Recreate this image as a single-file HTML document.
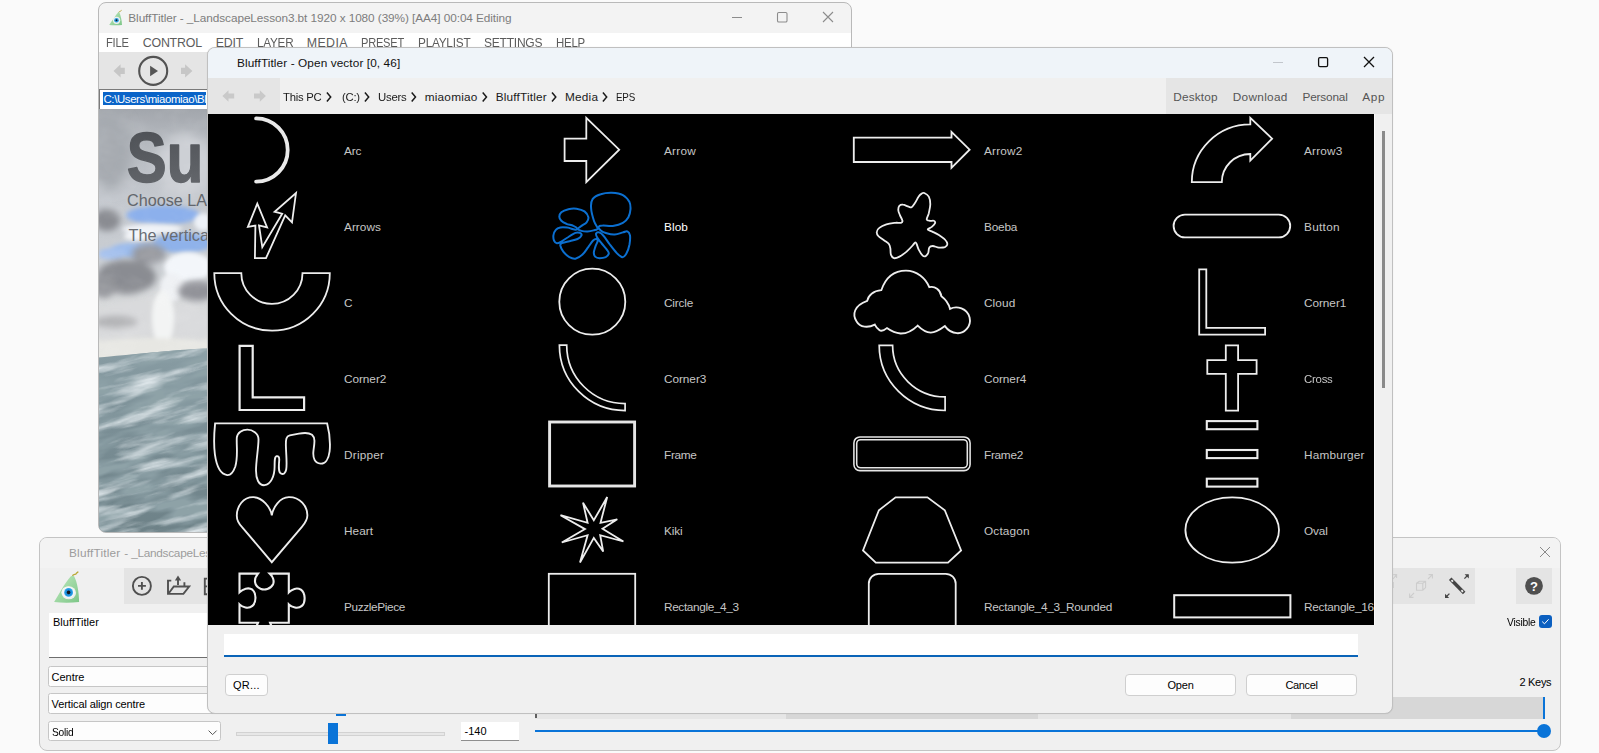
<!DOCTYPE html>
<html>
<head>
<meta charset="utf-8">
<title>BluffTitler</title>
<style>
*{box-sizing:border-box;margin:0;padding:0}
html,body{width:1599px;height:753px;overflow:hidden;background:#fafafa;font-family:"Liberation Sans",sans-serif;font-size:12px;color:#000}
.abs{position:absolute}
/* main window */
#mainwin{position:absolute;left:98px;top:2px;width:754px;height:531px;border:1px solid #b9b9b9;border-radius:8px;background:#f3f3f3;overflow:hidden}
#mainwin .title{position:absolute;left:29.3px;top:7.5px;font-size:11.8px;color:#7d7d7d;white-space:nowrap;letter-spacing:0}
#mainwin .menubar{position:absolute;left:0;top:30px;width:100%;height:19px;background:#fff}
#mainwin .menubar span{position:absolute;top:2.5px;font-size:12.4px;color:#5c5c5c;white-space:nowrap}
#mainwin .toolbar{position:absolute;left:0;top:49px;width:100%;height:37px;background:#e5e5e5}
#mainwin .path{position:absolute;left:0px;top:86px;width:300px;height:21px;background:#fff;border:1px solid #7a7a7a}
#mainwin .path span{position:absolute;left:3px;top:2px;height:13px;background:#0a64c8;color:#fff;font-size:11.4px;line-height:14.5px;white-space:nowrap;padding-left:0.5px}
#preview{position:absolute;left:0;top:106px;width:752px;height:423px;overflow:hidden;background:#9aa4ac}
/* bottom window */
#botwin{position:absolute;left:39px;top:537px;width:1522px;height:214px;border:1px solid #c4c4c4;border-radius:8px;background:#f0f0f0;overflow:hidden}
/* dialog */
#dlg{position:absolute;left:207px;top:47px;width:1186px;height:667px;border:1px solid #c0c0c0;border-radius:8px;background:#f0f0f0;overflow:hidden;box-shadow:0 0 1px rgba(0,0,0,.15)}
#dlg .tbar{position:absolute;left:0;top:0;width:100%;height:30px;background:#eff4f9}
#dlg .tbar .t{position:absolute;left:29px;top:7.5px;font-size:11.8px;color:#111;white-space:nowrap}
#dlg .nav{position:absolute;left:0;top:30px;width:100%;height:36px;background:#f0f0f0}
#dlg .nav .l{position:absolute;left:0;top:0;width:72px;height:36px;background:#e5e5e5}
#dlg .nav .r{position:absolute;left:958px;top:0;width:230px;height:36px;background:#e5e5e5}
#dlg .nav .bc{position:absolute;top:12px;font-size:11.8px;color:#1a1a1a;white-space:nowrap}
#dlg .nav .rl{position:absolute;top:12px;font-size:11.8px;color:#555;white-space:nowrap}
#grid{position:absolute;left:0;top:66px;width:1166px;height:511px;background:#000;overflow:hidden}
#grid .lb{position:absolute;font-size:11.8px;color:#c6c6c6;white-space:nowrap;line-height:14px}
#grid .lb.sel{color:#fff}
#grid svg{position:absolute;left:0;top:0}
.btn{position:absolute;height:22px;border:1px solid #cfcfcf;border-radius:4px;background:#fdfdfd;font-size:12px;text-align:center;line-height:20px;color:#000}
#dlg .sb{position:absolute;left:1174px;top:82.5px;width:3px;height:257.5px;background:#8a8a8a}
#grid:after{content:"";position:absolute;right:0;top:0;width:0;height:100%}
#dlg .wl{position:absolute;left:1166px;top:66px;width:1px;height:511px;background:#fbfbfb}
#dlg .inp{position:absolute;left:16.2px;top:586px;width:1133.8px;height:23px;background:#fff;border-bottom:2px solid #0a64b8}
.btn span{font-size:11px}
.ms{position:absolute;font-size:11px;line-height:13px;color:#000;white-space:nowrap}
.dd{position:absolute;left:48px;width:172.6px;height:20.2px;background:#fdfdfd;border:1px solid #c6c6c6;border-radius:2.5px}
</style>
</head>
<body>

<!-- MAIN WINDOW -->
<div id="mainwin">
  <div class="title" style="letter-spacing:-0.078px;">BluffTitler - _LandscapeLesson3.bt 1920 x 1080 (39%) [AA4] 00:04 Editing</div>
  <svg class="logo" width="16" height="17" viewBox="108 9 16 17" style="position:absolute;left:9px;top:6px">
<defs><linearGradient id="lg1" x1="0" y1="0" x2="1" y2="1"><stop offset="0" stop-color="#bfe8bd"/><stop offset="1" stop-color="#7cc687"/></linearGradient></defs>
<path d="M118.3 12.6C119.3 11.4 120.3 11.6 121.6 10.3" stroke="#b5a22e" stroke-width="0.9" fill="none"/>
<path d="M118.2 12.2C115.5 15.5 111.8 21 109.2 24.9C113 25.3 118 25.3 122 24.9C121.8 20 120.6 15.2 119.3 12.2Z" fill="url(#lg1)"/>
<circle cx="116.6" cy="20.3" r="3.6" fill="#eef1f0"/>
<circle cx="116.5" cy="20.3" r="2.3" fill="#2f9fe3"/>
<circle cx="116.5" cy="20.3" r="0.95" fill="#10141a"/>
</svg>
<svg width="120" height="20" viewBox="727 7 120 20" style="position:absolute;left:628px;top:4px" fill="none" stroke="#8c8c8c" stroke-width="1.1">
<path d="M732 17.5H742"/><rect x="777.5" y="12.5" width="9.5" height="9.5" rx="1.3"/><path d="M823 12L833 22M833 12L823 22"/>
</svg>
<div class="menubar"><span style="letter-spacing:-0.250px;display:inline-block;transform:scaleX(0.9008);transform-origin:0 50%;left:7.4px">FILE</span><span style="letter-spacing:-0.199px;left:43.7px">CONTROL</span><span style="letter-spacing:-0.211px;left:116.8px">EDIT</span><span style="letter-spacing:-0.250px;display:inline-block;transform:scaleX(0.9453);transform-origin:0 50%;left:157.8px">LAYER</span><span style="letter-spacing:0.363px;left:207.8px">MEDIA</span><span style="letter-spacing:-0.250px;display:inline-block;transform:scaleX(0.8939);transform-origin:0 50%;left:261.6px">PRESET</span><span style="letter-spacing:-0.250px;display:inline-block;transform:scaleX(0.9531);transform-origin:0 50%;left:318.8px">PLAYLIST</span><span style="letter-spacing:-0.250px;display:inline-block;transform:scaleX(0.9715);transform-origin:0 50%;left:384.5px">SETTINGS</span><span style="letter-spacing:-0.250px;display:inline-block;transform:scaleX(0.9233);transform-origin:0 50%;left:457.0px">HELP</span></div>
  <div class="toolbar">
<svg width="110" height="38" viewBox="99 52 110 38" style="position:absolute;left:0;top:0">
<path d="M113.5 70.9L120.6 64.3V67.8H124.8V74H120.6V77.4Z" fill="#c6c6c6"/>
<path d="M192.4 70.9L185.1 64.3V67.8H181V74H185.1V77.4Z" fill="#c6c6c6"/>
<circle cx="153.2" cy="70.9" r="14" fill="none" stroke="#535353" stroke-width="2.1"/>
<path d="M150.1 65.7V76.3L158 70.9Z" fill="#555"/>
</svg></div>
  <div class="path"><span style="letter-spacing:-0.365px;">C:\Users\miaomiao\Bl</span></div>
  <div id="preview"><svg width="752" height="424" viewBox="99 109 752 424" style="position:absolute;left:0;top:0">
<defs>
<filter id="b8" x="-50%" y="-50%" width="200%" height="200%"><feGaussianBlur stdDeviation="6"/></filter>
<filter id="b4" x="-50%" y="-50%" width="200%" height="200%"><feGaussianBlur stdDeviation="3.2"/></filter>
<filter id="b2" x="-50%" y="-50%" width="200%" height="200%"><feGaussianBlur stdDeviation="2"/></filter>
<filter id="cl" x="0" y="0" width="100%" height="100%">
<feTurbulence type="fractalNoise" baseFrequency="0.035 0.05" numOctaves="3" seed="11" result="n"/>
<feColorMatrix in="n" type="matrix" values="0 0 0 0 1  0 0 0 0 1  0 0 0 0 1  1.4 0 0 0 -0.55" result="c"/>
<feComposite in="c" in2="SourceGraphic" operator="in"/>
</filter>
<filter id="sea" x="0" y="0" width="100%" height="100%">
<feTurbulence type="fractalNoise" baseFrequency="0.016 0.09" numOctaves="4" seed="7" result="n"/>
<feColorMatrix in="n" type="matrix" values="0 0 0 0 0.74  0 0 0 0 0.80  0 0 0 0 0.83  2.6 0 0 0 -1.2" result="c"/>
<feComposite in="c" in2="SourceGraphic" operator="in"/>
</filter>
<filter id="sea2" x="0" y="0" width="100%" height="100%">
<feTurbulence type="fractalNoise" baseFrequency="0.02 0.08" numOctaves="3" seed="23" result="n"/>
<feColorMatrix in="n" type="matrix" values="0 0 0 0 0.27  0 0 0 0 0.36  0 0 0 0 0.39  0 3.2 0 0 -1.1" result="c"/>
<feComposite in="c" in2="SourceGraphic" operator="in"/>
</filter>
<linearGradient id="sky" x1="0" y1="0" x2="0" y2="1">
<stop offset="0" stop-color="#a2a6ac"/><stop offset="0.12" stop-color="#b4b8be"/><stop offset="0.35" stop-color="#c4c8ce"/><stop offset="0.6" stop-color="#c9cdd2"/><stop offset="0.85" stop-color="#dcdddd"/><stop offset="1" stop-color="#e9e9e4"/>
</linearGradient>
<linearGradient id="seag" x1="0" y1="0" x2="0" y2="1">
<stop offset="0" stop-color="#a3b3b8"/><stop offset="0.1" stop-color="#879ba2"/><stop offset="0.5" stop-color="#798d94"/><stop offset="1" stop-color="#6d8187"/>
</linearGradient>
<linearGradient id="tg" x1="0" y1="0" x2="0" y2="1"><stop offset="0" stop-color="#3e4146"/><stop offset="1" stop-color="#585b60"/></linearGradient>
<clipPath id="seaclip"><path d="M99 357.5C120 355.5 150 352.5 180 350C195 349 205 348.5 215 348L851 340V533H99Z"/></clipPath>
</defs>
<rect x="99" y="109" width="752" height="250" fill="url(#sky)"/>
<g filter="url(#b8)">
<ellipse cx="110" cy="150" rx="22" ry="40" fill="#a6aab0"/>
<ellipse cx="185" cy="165" rx="30" ry="30" fill="#cdd0d5"/>
</g>
<!-- blue patches -->
<g filter="url(#b2)">
<ellipse cx="163" cy="215" rx="37" ry="9.5" fill="#8cb0ec"/>
<ellipse cx="183" cy="243" rx="30" ry="10" fill="#8fb2ea"/>
<ellipse cx="137" cy="250" rx="28" ry="7.5" fill="#98b9ec"/>
<ellipse cx="112" cy="254" rx="14" ry="6" fill="#a5c1ee"/>
</g>
<!-- white -->
<g filter="url(#b2)">
<ellipse cx="152" cy="229" rx="30" ry="5" fill="#f0f3f8"/>
<ellipse cx="203" cy="222" rx="9" ry="9" fill="#eef2f8"/>
<ellipse cx="140" cy="236" rx="16" ry="5" fill="#f3f5f9"/>
<ellipse cx="188" cy="267" rx="24" ry="15" fill="#f3f6fa"/>
<ellipse cx="172" cy="287" rx="12" ry="14" fill="#eff1f4"/>
<ellipse cx="152" cy="325" rx="62" ry="26" fill="#d9dadc"/>
<ellipse cx="163" cy="318" rx="11" ry="28" fill="#f3f4f4"/>
<ellipse cx="152" cy="345" rx="62" ry="7" fill="#e7e7e3"/>
</g>
<!-- grey clouds -->
<g filter="url(#b4)">
<ellipse cx="107" cy="220" rx="13" ry="11" fill="#8a8c92"/>
<ellipse cx="149" cy="254" rx="17" ry="10" fill="#96989e"/>
<ellipse cx="126" cy="277" rx="30" ry="17" fill="#8a8c92"/>
<ellipse cx="104" cy="286" rx="12" ry="12" fill="#909297"/>
<ellipse cx="197" cy="291" rx="19" ry="10" fill="#929399"/>
<ellipse cx="116" cy="322" rx="22" ry="6" fill="#b0b1b4"/>
</g>
<rect x="99" y="109" width="120" height="245" fill="#fff" filter="url(#cl)" opacity="0.15"/>
<!-- sea -->
<g clip-path="url(#seaclip)">
<rect x="99" y="338" width="752" height="196" fill="url(#seag)"/>
<g transform="rotate(-14 150 440)">
<rect x="40" y="300" width="860" height="420" fill="#fff" filter="url(#sea2)"/>
<rect x="40" y="300" width="860" height="420" fill="#fff" filter="url(#sea)"/>
</g>
</g>
<!-- text -->
<text x="126.8" y="181.8" font-family="Liberation Sans, sans-serif" font-weight="bold" font-size="69.5" fill="url(#tg)" stroke="url(#tg)" stroke-width="1.4" stroke-linejoin="round" opacity="0.88" textLength="76.5" lengthAdjust="spacingAndGlyphs">Su</text>
<text x="127" y="206.3" font-family="Liberation Sans, sans-serif" font-size="16.6" fill="#62666c" textLength="80" lengthAdjust="spacingAndGlyphs">Choose LA</text>
<text x="128.5" y="240.5" font-family="Liberation Sans, sans-serif" font-size="16.6" fill="#686c72" textLength="80.5" lengthAdjust="spacingAndGlyphs">The vertica</text>
</svg>
</div>
</div>

<!-- BOTTOM WINDOW -->
<div id="botwin">
<div style="position:absolute;left:-40px;top:-538px;width:1599px;height:753px">
<div class="titlestrip" style="position:absolute;left:40px;top:538px;width:1520px;height:30px;background:#f3f3f3"></div>
<div class="btitle" style="letter-spacing:0.203px;position:absolute;left:69px;top:545.5px;font-size:11.8px;color:#9c9c9c;white-space:nowrap">BluffTitler</div><div class="btitle" style="position:absolute;left:124.2px;top:545.5px;font-size:11.8px;color:#9c9c9c;white-space:nowrap">-</div><div class="btitle" style="letter-spacing:-0.277px;position:absolute;left:131.2px;top:545.5px;font-size:11.8px;color:#9c9c9c;white-space:nowrap">_LandscapeLesson3.bt</div>
<div style="position:absolute;left:124px;top:568px;width:1351px;height:36px;background:#e4e4e4"></div>
<div style="position:absolute;left:1516px;top:568px;width:36px;height:36px;background:#e4e4e4"></div>
<svg width="1599" height="80" viewBox="0 540 1599 80" style="position:absolute;left:0;top:540px" fill="none">
<defs><linearGradient id="lgb" x1="0" y1="0" x2="1" y2="1"><stop offset="0" stop-color="#c2eac0"/><stop offset="1" stop-color="#7cc687"/></linearGradient></defs>
<!-- close -->
<path d="M1540 547L1550 557M1550 547L1540 557" stroke="#8a8a8a" stroke-width="1"/>
<!-- logo -->
<path d="M72.3 576.4C73.2 573.6 75.6 575.2 76.3 573.4C76.8 572.6 77.6 572.4 78.3 571.6" stroke="#b9a733" stroke-width="1.3" fill="none"/>
<path d="M54.1 602C58.5 595.5 64 584 70.6 576.6C71.6 575.5 73.6 575.4 74.3 576.6C77.2 582.5 79 592 79.1 602C71 603 62 603 54.1 602Z" fill="url(#lgb)"/>
<ellipse cx="68.8" cy="592.8" rx="7.3" ry="6.5" fill="#e9eeeb"/>
<ellipse cx="68.2" cy="592.2" rx="6.6" ry="5.8" fill="#f4f6f5"/>
<circle cx="68.6" cy="592.4" r="4.4" fill="#2ba2ea"/>
<circle cx="68.6" cy="592.4" r="3.2" fill="#1b8bd6"/>
<circle cx="68.6" cy="592.4" r="1.8" fill="#14161c"/>
<!-- plus circle -->
<circle cx="141.9" cy="585.9" r="9" stroke="#505050" stroke-width="1.9"/>
<path d="M138 585.9H145.9M141.9 582V589.8" stroke="#505050" stroke-width="1.9"/>
<!-- folder up -->
<path d="M171.3 580.6H168V593.9H183.4L189.2 586.5H173.8L168.4 593.7" stroke="#505050" stroke-width="1.9" stroke-linejoin="miter"/>
<path d="M178 585V579.5" stroke="#505050" stroke-width="1.9"/>
<path d="M174.9 580.6L178 575.4L181.1 580.6Z" fill="#505050"/>
<path d="M184.4 582.2V586.5" stroke="#505050" stroke-width="1.9"/>
<!-- third icon (clipped) -->
<path d="M209 578.6H204.8V594.2H209M204 586.4H209" stroke="#505050" stroke-width="1.9"/>
<!-- faded icons -->
<g stroke="#cdcdcd" stroke-width="1.1">
<path d="M1416.5 583.3L1419.3 581.3H1425.6V587.6L1422.8 590.2H1416.5ZM1416.5 583.3H1422.8V590.2M1422.8 583.3L1425.6 581.3"/>
<path d="M1428 579L1432.4 574.6M1428.6 574.6H1432.4V578.4"/>
<path d="M1414 593L1409.6 597.4M1413.4 597.4H1409.6V593.6"/>
<path d="M1393 579L1396.6 574.6M1393.2 574.6H1396.6V578"/>
<path d="M1393 582V588" stroke-width="1.6"/>
</g>
<!-- ruler icon -->
<path d="M1450.2 578.8L1464.2 593" stroke="#454545" stroke-width="3.5"/>
<rect x="-1.1" y="-0.9" width="2.2" height="1.8" transform="translate(1452.2 580.8) rotate(45)" fill="#f0f0f0"/>
<rect x="-1.1" y="-0.9" width="2.2" height="1.8" transform="translate(1462.2 591) rotate(45)" fill="#f0f0f0"/>
<path d="M1464.4 578.6L1468 575" stroke="#454545" stroke-width="1.3"/><path d="M1464.6 574.2H1468.8V578.4Z" fill="#454545"/>
<path d="M1449.4 593.6L1445.8 597.2" stroke="#454545" stroke-width="1.3"/><path d="M1449.2 598H1445V593.8Z" fill="#454545"/>
<!-- help -->
<circle cx="1534" cy="585.9" r="8.9" fill="#4f4f4f"/>
</svg>
<div style="position:absolute;left:1528px;top:578.5px;width:12px;text-align:center;font-weight:bold;font-size:13px;line-height:15px;color:#fff">?</div>
<!-- text area -->
<div style="position:absolute;left:49px;top:613px;width:420px;height:44.5px;background:#fff;border-bottom:1px solid #6e6e6e"></div>
<div class="ms" style="left:53px;top:615.5px">BluffTitler</div>
<div class="dd" style="top:666.4px"></div><div class="ms" style="letter-spacing:-0.026px;left:51.6px;top:670.5px">Centre</div>
<div class="dd" style="top:693.4px"></div><div class="ms" style="letter-spacing:-0.120px;left:51.6px;top:697.5px">Vertical align centre</div>
<div class="dd" style="top:721.3px"></div><div class="ms" style="letter-spacing:-0.250px;display:inline-block;transform:scaleX(0.9289);transform-origin:0 50%;left:51.6px;top:726px">Solid</div>
<svg width="10" height="6" viewBox="0 0 10 6" style="position:absolute;left:207.5px;top:729.5px" fill="none"><path d="M0.6 0.6L4.6 4.6L8.6 0.6" stroke="#555" stroke-width="1"/></svg>
<!-- slider -->
<div style="position:absolute;left:236px;top:731.6px;width:209px;height:4.4px;background:#e7e7e7;border:1px solid #d2d2d2"></div>
<div style="position:absolute;left:328px;top:723.2px;width:10px;height:20.6px;background:#0a74d8"></div>
<div style="position:absolute;left:336px;top:712px;width:10px;height:3.5px;background:#0a74d8"></div>
<div style="position:absolute;left:461px;top:721.5px;width:58px;height:19px;background:#fff;border-bottom:1px solid #8e8e8e"></div>
<div class="ms" style="left:464.5px;top:725px">-140</div>
<!-- timeline -->
<div style="position:absolute;left:535px;top:697px;width:1009px;height:21.8px;background:linear-gradient(90deg,#e6e6e6 0,#e6e6e6 251.5px,#d7d7d7 251.5px,#d7d7d7 503.5px,#e6e6e6 503.5px,#e6e6e6 756px,#d7d7d7 756px)"></div>
<div style="position:absolute;left:535px;top:697px;width:1.6px;height:21.2px;background:#606060"></div>
<div style="position:absolute;left:1543px;top:697px;width:2px;height:22px;background:#0a74d8"></div>
<div style="position:absolute;left:535px;top:730px;width:1009px;height:2px;background:#0a74d8"></div>
<div style="position:absolute;left:1537px;top:724.1px;width:13.8px;height:13.8px;border-radius:7px;background:#0a74d8"></div>
<div class="ms" style="letter-spacing:-0.250px;display:inline-block;transform:scaleX(0.9375);transform-origin:0 50%;left:1506.6px;top:615.5px">Visible</div>
<div style="position:absolute;left:1539.2px;top:615px;width:12.8px;height:12.8px;border-radius:3px;background:#0b5fc0"></div>
<svg width="13" height="13" viewBox="1539.2 615 13 13" style="position:absolute;left:1539.2px;top:615px" fill="none"><path d="M1542.4 621.6L1544.7 623.8L1548.8 619.3" stroke="#fff" stroke-width="1"/></svg>
<div class="ms" style="letter-spacing:-0.328px;left:1519.6px;top:675.7px">2 Keys</div>
</div>

</div>

<!-- DIALOG -->
<div id="dlg">
  <div class="tbar"><svg width="130" height="20" viewBox="1268 52 130 20" style="position:absolute;left:1060px;top:4px" fill="none" stroke="#111" stroke-width="1.3">
<path d="M1273 62.5H1283" stroke="#c2c6cc" stroke-width="1"/><rect x="1318.6" y="57.6" width="9" height="9" rx="1.3"/><path d="M1364 57L1374 67M1374 57L1364 67"/>
</svg><div class="t" style="letter-spacing:0.100px;">BluffTitler - Open vector [0, 46]</div></div>
  <div class="nav"><div class="l"></div><div class="r"></div>
<div class="bc" style="letter-spacing:-0.250px;display:inline-block;transform:scaleX(0.9567);transform-origin:0 50%;left:75.2px">This PC</div><div class="bc" style="letter-spacing:-0.250px;display:inline-block;transform:scaleX(0.9574);transform-origin:0 50%;left:134.4px">(C:)</div><div class="bc" style="letter-spacing:-0.250px;display:inline-block;transform:scaleX(0.9660);transform-origin:0 50%;left:169.9px">Users</div><div class="bc" style="letter-spacing:0.223px;left:216.7px">miaomiao</div><div class="bc" style="letter-spacing:0.193px;left:287.7px">BluffTitler</div><div class="bc" style="letter-spacing:0.215px;left:357.0px">Media</div><div class="bc" style="letter-spacing:-0.250px;display:inline-block;transform:scaleX(0.8308);transform-origin:0 50%;left:407.9px">EPS</div>
<svg width="1186" height="36" viewBox="208 78 1186 36" style="position:absolute;left:0;top:0" fill="none"><path d="M222.4 96L228.5 90.3V93.4H234.2V98.6H228.5V101.7Z" fill="#c9c9c9"/><path d="M265.9 96L259.8 90.3V93.4H254V98.6H259.8V101.7Z" fill="#c9c9c9"/><path d="M326.9 92.6L330.7 97L326.9 101.4" stroke="#1a1a1a" stroke-width="1.5"/><path d="M364.9 92.6L368.7 97L364.9 101.4" stroke="#1a1a1a" stroke-width="1.5"/><path d="M411.7 92.6L415.5 97L411.7 101.4" stroke="#1a1a1a" stroke-width="1.5"/><path d="M482.7 92.6L486.5 97L482.7 101.4" stroke="#1a1a1a" stroke-width="1.5"/><path d="M552.0 92.6L555.8 97L552.0 101.4" stroke="#1a1a1a" stroke-width="1.5"/><path d="M602.9 92.6L606.7 97L602.9 101.4" stroke="#1a1a1a" stroke-width="1.5"/></svg>
<div class="rl" style="letter-spacing:0.153px;left:965.3px">Desktop</div><div class="rl" style="letter-spacing:0.304px;left:1024.8px">Download</div><div class="rl" style="letter-spacing:-0.180px;left:1094.5px">Personal</div><div class="rl" style="letter-spacing:0.750px;left:1154.2px">App</div></div>
  <div id="grid"><svg width="1166" height="511" viewBox="208 114 1166 511" fill="none" stroke-linejoin="miter">
<path d="M256.1 118.4A31.6 31.6 0 0 1 256.1 181.6" stroke="#e9e9e9" stroke-width="3.8" stroke-linecap="round"/>
<path d="M257.3 203.6L247.9 226.9L255.4 225.6L254.9 258.2L266.0 258.2L285.2 215.3L292.0 222.3L296.0 193.0L274.6 211.7L282.2 213.7L262.3 247.1L259.0 225.4L267.1 227.4Z" stroke="#ededed" stroke-width="1.8" />
<path d="M214.3 273.2L241.3 273.2A30.6 30.6 0 0 0 302.5 273.2L329.8 273.2A57.75 57.5 0 0 1 214.3 273.2Z" stroke="#ededed" stroke-width="1.8" />
<path d="M239.6 345.8H252.7V397.3H304.1V410H239.6Z" stroke="#ededed" stroke-width="2.2" />
<path d="M215.1 423.3 L327.1 423.3 C329.1 431.1 330.7 441.2 329.6 451.3 C328.6 459.4 325.1 464.0 320.6 463.6 C315.0 463.2 312.5 458.4 313.5 450.3 C314.5 443.3 315.5 437.7 312.0 434.7 C308.9 432.7 303.9 432.7 298.9 433.7 L289.8 435.4 C286.2 436.2 285.7 439.2 285.9 446.3 C286.2 456.4 287.2 463.4 286.2 469.5 C285.5 473.5 283.2 474.6 281.2 473.7 C278.2 472.5 278.7 466.5 279.2 460.4 C279.5 456.9 278.2 455.9 276.6 456.2 C274.6 456.6 274.6 460.4 274.6 466.5 C274.6 476.6 270.6 484.6 264.5 485.2 C258.5 485.5 256.0 478.6 256.0 470.5 C256.0 460.4 258.5 448.3 258.5 439.2 C258.5 433.2 252.4 429.6 247.4 429.6 C242.3 429.6 237.3 432.7 236.8 437.7 C236.3 446.3 238.3 456.4 235.3 466.5 C233.2 472.5 230.7 475.4 227.2 475.1 C221.1 474.3 216.6 466.5 214.9 454.4 C213.6 444.3 214.1 433.2 215.1 423.3 Z" stroke="#ededed" stroke-width="1.85" />
<path d="M271.8 515.4 C270.6 507.1 262.5 497.6 253.4 497.2 C243.3 497.0 236.8 506.1 236.8 515.7 C236.8 521.3 239.3 524.3 242.3 527.3 L271.8 562.2 L301.9 526.8 C304.9 523.3 307.4 520.3 307.4 515.2 C307.4 506.1 299.9 497.0 288.8 497.2 C279.7 497.6 273.1 507.1 271.8 515.4 Z" stroke="#ededed" stroke-width="1.85" />
<path d="M239.5 573.6 L258.0 573.6 C253.4 579.1 253.9 585.7 260.5 588.7 C264.5 590.4 270.6 589.2 273.1 584.2 C274.6 580.7 272.6 576.1 269.8 573.6 L288.8 573.6 L288.8 592.3 C291.8 589.2 296.8 587.2 300.9 589.7 C305.4 592.8 305.9 602.4 301.9 605.9 C297.8 609.4 291.8 607.4 288.8 604.4 L288.8 622.8 L270.1 622.8 L272.6 628.6 L255.4 628.6 L258.0 622.8 L239.5 622.8 L239.5 604.4 C242.3 607.4 248.4 609.4 252.4 605.9 C256.5 602.4 256.5 593.3 252.4 589.7 C248.4 586.7 242.8 589.2 239.5 592.3 Z" stroke="#ededed" stroke-width="2.1" />
<path d="M564.6 138.7H586.3V117.9L619.2 149.7L586.3 182.2V161H564.6Z" stroke="#ededed" stroke-width="1.8" />
<path d="M597.7 228.4C597.7 226.9 595.2 224.7 594.1 221.3C593.0 217.9 591.3 211.9 591.1 208.2C590.8 204.5 591.0 201.4 592.6 199.1C594.2 196.8 597.5 195.3 600.7 194.3C603.9 193.2 608.1 192.7 611.8 192.8C615.5 193.0 619.9 193.5 622.9 195.1C625.8 196.6 628.2 199.8 629.5 202.1C630.7 204.5 630.6 206.7 630.5 209.2C630.3 211.7 629.7 215.0 628.4 217.3C627.2 219.5 625.5 221.4 622.9 222.8C620.3 224.3 616.2 225.4 612.8 225.9C609.4 226.3 605.1 225.4 602.7 225.6C600.3 225.7 599.0 226.1 598.7 226.9C598.3 227.7 599.3 229.3 600.7 230.4C602.0 231.5 604.4 232.6 606.7 233.2C609.1 233.9 612.1 234.6 614.8 234.4C617.5 234.3 620.8 232.9 622.9 232.4C625.0 231.9 626.3 230.9 627.4 231.4C628.6 231.9 629.6 233.3 630.0 235.4C630.3 237.6 630.0 241.5 629.5 244.5C628.9 247.6 627.6 251.5 626.4 253.6C625.2 255.7 624.0 257.2 622.4 257.2C620.8 257.1 618.9 255.2 616.8 253.1C614.7 251.0 612.0 247.4 609.8 244.5C607.6 241.7 605.5 238.0 603.7 236.0C601.9 233.9 600.4 232.8 599.2 232.4C597.9 232.0 596.5 232.6 596.1 233.4C595.8 234.3 596.2 235.8 597.2 237.5C598.1 239.1 600.0 241.4 601.7 243.5C603.4 245.6 606.1 248.4 607.2 250.1C608.4 251.8 609.0 252.4 608.8 253.6C608.5 254.8 607.2 256.4 605.7 257.2C604.2 257.9 601.4 258.2 599.7 258.2C597.9 258.1 596.1 257.6 595.1 256.6C594.2 255.7 593.8 254.3 593.8 252.6C593.9 250.9 594.8 248.5 595.4 246.6C596.1 244.6 597.5 242.3 597.7 241.0C597.8 239.7 597.2 239.1 596.4 239.0C595.7 238.9 594.4 239.2 593.1 240.5C591.8 241.8 590.3 244.2 588.6 246.6C586.8 248.9 584.7 252.6 582.5 254.6C580.3 256.6 577.6 258.2 575.4 258.7C573.3 259.1 571.4 258.3 569.4 257.2C567.4 256.0 564.8 253.5 563.3 251.6C561.8 249.7 560.6 247.0 560.3 245.5C560.1 244.1 560.5 243.7 561.8 243.0C563.2 242.3 565.8 242.2 568.4 241.5C571.0 240.8 575.3 240.0 577.5 239.0C579.7 238.0 581.1 236.5 581.5 235.4C581.9 234.4 581.0 233.3 580.0 232.9C579.0 232.5 577.4 232.2 575.4 232.9C573.5 233.6 570.7 235.5 568.4 237.0C566.0 238.4 563.2 240.4 561.3 241.5C559.4 242.6 558.0 243.5 556.8 243.3C555.6 243.2 554.6 241.8 554.0 240.5C553.5 239.2 553.2 237.2 553.4 235.4C553.7 233.7 554.6 231.2 555.8 229.9C556.9 228.5 558.4 227.8 560.3 227.4C562.2 227.0 565.0 227.2 567.4 227.6C569.7 227.9 572.8 229.4 574.4 229.6C576.1 229.8 577.6 229.5 577.5 228.9C577.3 228.3 575.3 226.7 573.4 225.9C571.6 225.0 568.4 224.7 566.4 223.8C564.3 223.0 562.5 222.0 561.3 220.8C560.1 219.6 559.3 218.2 559.3 216.8C559.3 215.3 559.8 213.5 561.3 212.2C562.8 211.0 565.9 209.8 568.4 209.2C570.9 208.6 573.8 208.3 576.5 208.7C579.1 209.1 582.5 210.0 584.5 211.4C586.5 212.9 588.0 215.5 588.4 217.3C588.7 219.1 587.7 220.9 586.6 222.3C585.4 223.8 582.9 224.8 581.5 225.9C580.1 226.9 578.0 228.0 578.0 228.9C578.0 229.7 579.9 230.4 581.5 230.9C583.1 231.4 585.5 231.7 587.6 231.6C589.6 231.5 591.9 230.9 593.6 230.4C595.3 229.9 597.6 229.9 597.7 228.4Z" stroke="#0b6fd0" stroke-width="2.0" />
<circle cx="592.3" cy="301.7" r="33" stroke="#ededed" stroke-width="1.8"/>
<path d="M559.4 345.2H566.7A58.4 58.4 0 0 0 625.1 403.6V410.6A65.7 65.4 0 0 1 559.4 345.2Z" stroke="#ededed" stroke-width="1.7" />
<rect x="549.6" y="422" width="85" height="64" stroke="#e6e6e6" stroke-width="2.9"/>
<path d="M607.2 497.0L600.5 522.8L617.3 519.3L602.5 528.8L623.4 541.5L600.2 535.2L603.2 551.6L593.8 537.9L580.0 562.5L587.6 535.2L561.8 542.5L585.0 529.1L560.5 515.2L587.6 522.8L583.0 502.6L593.8 520.3Z" stroke="#ededed" stroke-width="1.8" />
<rect x="548.8" y="573.8" width="86.4" height="70" stroke="#ededed" stroke-width="1.8"/>
<path d="M853.8 137.6H951.5V131.9L969.6 149.7L951.5 167.8V162H853.8Z" stroke="#ededed" stroke-width="1.85" />
<path d="M924.2 193.0C925.4 193.6 927.7 194.7 928.8 196.6C929.8 198.4 930.3 201.4 930.3 204.2C930.3 206.9 929.3 210.7 928.8 213.2C928.2 215.8 926.6 218.0 926.7 219.3C926.9 220.6 928.6 220.6 929.8 220.8C930.9 221.1 932.9 220.4 933.8 220.8C934.7 221.2 935.4 222.3 935.0 223.3C934.7 224.3 933.0 225.9 931.8 226.9C930.6 227.9 927.7 228.6 927.7 229.4C927.7 230.1 929.9 230.5 931.8 231.4C933.6 232.3 936.7 233.6 938.9 234.9C941.0 236.3 943.5 238.0 944.9 239.5C946.3 241.0 947.4 242.8 947.4 244.0C947.4 245.3 946.3 246.5 944.9 247.1C943.5 247.6 940.9 247.7 938.9 247.6C936.8 247.4 934.4 246.0 932.8 246.0C931.2 246.0 930.0 246.5 929.3 247.6C928.5 248.7 928.8 251.2 928.3 252.6C927.7 254.0 926.7 255.6 925.7 256.1C924.8 256.6 923.9 256.7 922.7 255.6C921.5 254.5 919.7 251.5 918.7 249.6C917.7 247.6 917.2 245.2 916.6 244.0C916.1 242.8 915.8 242.3 915.1 242.5C914.5 242.8 914.0 244.0 912.6 245.5C911.2 247.1 908.7 249.7 906.6 251.6C904.4 253.4 901.6 255.6 899.5 256.6C897.4 257.7 895.4 258.5 893.9 258.2C892.5 257.8 891.5 256.2 890.9 254.6C890.3 253.0 890.7 250.3 890.4 248.6C890.1 246.8 889.9 245.4 888.9 244.0C887.9 242.7 886.1 241.8 884.3 240.5C882.6 239.1 879.5 237.4 878.3 236.0C877.0 234.5 876.6 233.3 876.8 231.9C876.9 230.6 877.7 229.1 879.3 227.9C880.9 226.6 883.7 225.2 886.4 224.3C889.1 223.5 893.0 223.1 895.4 222.8C897.9 222.6 899.8 223.2 901.0 222.8C902.2 222.5 902.7 222.1 902.5 220.8C902.3 219.5 900.7 217.0 900.0 215.3C899.3 213.5 898.4 211.8 898.3 210.2C898.2 208.6 898.7 206.6 899.5 205.7C900.3 204.7 901.5 204.5 903.0 204.7C904.5 204.8 907.1 206.3 908.6 206.7C910.0 207.1 910.6 207.7 911.6 207.2C912.6 206.7 913.4 205.4 914.6 203.6C915.8 201.9 917.5 198.3 918.7 196.6C919.8 194.9 920.8 194.1 921.7 193.6C922.6 193.0 923.0 192.5 924.2 193.0Z" stroke="#ededed" stroke-width="1.8" />
<path d="M881.3 290.2 C886.4 275.1 896.5 270.6 906.0 270.6 C916.6 270.6 925.7 278.1 929.3 287.2 C934.8 285.7 940.4 289.7 941.4 296.3 C945.4 299.3 948.9 304.4 950.0 308.9 C957.0 305.4 967.1 308.4 969.6 317.5 C971.7 326.6 964.1 333.7 957.0 333.2 C952.0 332.8 947.4 329.6 944.9 326.1 C938.9 330.6 934.8 332.6 930.8 332.6 C925.7 332.4 921.2 329.1 917.7 325.6 C912.6 330.6 906.6 333.7 900.5 333.5 C895.4 333.2 890.4 330.6 886.9 328.1 C883.3 331.1 881.3 331.6 879.3 330.1 C877.3 328.6 875.8 326.6 874.8 324.6 C868.2 328.1 860.1 327.6 856.6 321.5 C852.0 314.5 854.1 305.4 867.2 300.8 C868.2 295.3 873.2 290.8 881.3 290.2 Z" stroke="#ededed" stroke-width="1.85" />
<path d="M879.2 345.3H892.6A52.5 51.6 0 0 0 945.1 396.9V410.5A65.9 65.2 0 0 1 879.2 345.3Z" stroke="#ededed" stroke-width="1.7" />
<rect x="853.9" y="436.9" width="116.2" height="33.7" rx="6" stroke="#e6e6e6" stroke-width="1.55"/>
<rect x="856.7" y="439.7" width="110.6" height="28.1" rx="4" stroke="#e6e6e6" stroke-width="1.55"/>
<path d="M895.6 497.4H927.4L944.8 510.2L961.1 550.5L948 562.6H875.8L863 550.5L878.9 510.2Z" stroke="#ededed" stroke-width="1.8" />
<rect x="868.8" y="573.8" width="86.9" height="70" rx="10" stroke="#ededed" stroke-width="1.8"/>
<path d="M1272.1 138.7L1250.3 117.9V124.4A58.5 57.8 0 0 0 1191.8 182.2H1221.8A28.5 28.2 0 0 1 1250.3 154V160.6Z" stroke="#ededed" stroke-width="1.8" />
<rect x="1173.6" y="214.6" width="116.6" height="22.8" rx="11.4" stroke="#ededed" stroke-width="1.85"/>
<path d="M1199.2 269.3H1206.3V327.8H1265.1V334.6H1199.2Z" stroke="#ededed" stroke-width="1.8" />
<path d="M1225.8 345.4H1238.1V360.1H1256.6V373.9H1238.1V410.7H1225.8V373.9H1207.3V360.1H1225.8Z" stroke="#ededed" stroke-width="1.8" />
<rect x="1206.8" y="421.1" width="50.6" height="8.1" stroke="#ededed" stroke-width="2.1"/>
<rect x="1206.8" y="450.0" width="50.6" height="8.1" stroke="#ededed" stroke-width="2.1"/>
<rect x="1206.8" y="478.7" width="50.6" height="7.9" stroke="#ededed" stroke-width="2.1"/>
<ellipse cx="1232.2" cy="530" rx="46.8" ry="32.7" stroke="#ededed" stroke-width="1.8"/>
<rect x="1174.2" y="595.2" width="116.2" height="22.2" stroke="#ededed" stroke-width="2"/>
</svg>
<div class="lb" style="letter-spacing:-0.122px;left:136px;top:30px">Arc</div>
<div class="lb" style="letter-spacing:0.237px;left:456px;top:30px">Arrow</div>
<div class="lb" style="letter-spacing:0.171px;left:776px;top:30px">Arrow2</div>
<div class="lb" style="letter-spacing:0.171px;left:1096px;top:30px">Arrow3</div>
<div class="lb" style="letter-spacing:0.028px;left:136px;top:106px">Arrows</div>
<div class="lb sel" style="letter-spacing:0.082px;left:456px;top:106px">Blob</div>
<div class="lb" style="letter-spacing:-0.196px;left:776px;top:106px">Boeba</div>
<div class="lb" style="letter-spacing:0.300px;left:1096px;top:106px">Button</div>
<div class="lb" style="letter-spacing:0.000px;left:136px;top:182px">C</div>
<div class="lb" style="letter-spacing:-0.185px;left:456px;top:182px">Circle</div>
<div class="lb" style="letter-spacing:0.095px;left:776px;top:182px">Cloud</div>
<div class="lb" style="letter-spacing:-0.049px;left:1096px;top:182px">Corner1</div>
<div class="lb" style="letter-spacing:-0.049px;left:136px;top:258px">Corner2</div>
<div class="lb" style="letter-spacing:-0.049px;left:456px;top:258px">Corner3</div>
<div class="lb" style="letter-spacing:-0.049px;left:776px;top:258px">Corner4</div>
<div class="lb" style="letter-spacing:-0.250px;display:inline-block;transform:scaleX(0.9667);transform-origin:0 50%;left:1096px;top:258px">Cross</div>
<div class="lb" style="letter-spacing:0.227px;left:136px;top:334px">Dripper</div>
<div class="lb" style="letter-spacing:-0.328px;left:456px;top:334px">Frame</div>
<div class="lb" style="letter-spacing:-0.281px;left:776px;top:334px">Frame2</div>
<div class="lb" style="letter-spacing:0.188px;left:1096px;top:334px">Hamburger</div>
<div class="lb" style="letter-spacing:0.070px;left:136px;top:410px">Heart</div>
<div class="lb" style="letter-spacing:-0.095px;left:456px;top:410px">Kiki</div>
<div class="lb" style="letter-spacing:0.170px;left:776px;top:410px">Octagon</div>
<div class="lb" style="letter-spacing:-0.155px;left:1096px;top:410px">Oval</div>
<div class="lb" style="letter-spacing:-0.365px;left:136px;top:486px">PuzzlePiece</div>
<div class="lb" style="letter-spacing:-0.357px;left:456px;top:486px">Rectangle_4_3</div>
<div class="lb" style="letter-spacing:-0.279px;left:776px;top:486px">Rectangle_4_3_Rounded</div>
<div class="lb" style="letter-spacing:-0.246px;left:1096px;top:486px">Rectangle_16</div></div>
  <div class="sb"></div><div class="wl"></div>
  <div class="inp"></div>
  <div class="btn" style="left:17px;top:626px;width:43px"><span style="letter-spacing:0.232px;">QR...</span></div>
  <div class="btn" style="left:917px;top:626px;width:111px"><span style="letter-spacing:-0.174px;">Open</span></div>
  <div class="btn" style="left:1038px;top:626px;width:111px"><span style="letter-spacing:-0.370px;">Cancel</span></div>

</div>

</body>
</html>
